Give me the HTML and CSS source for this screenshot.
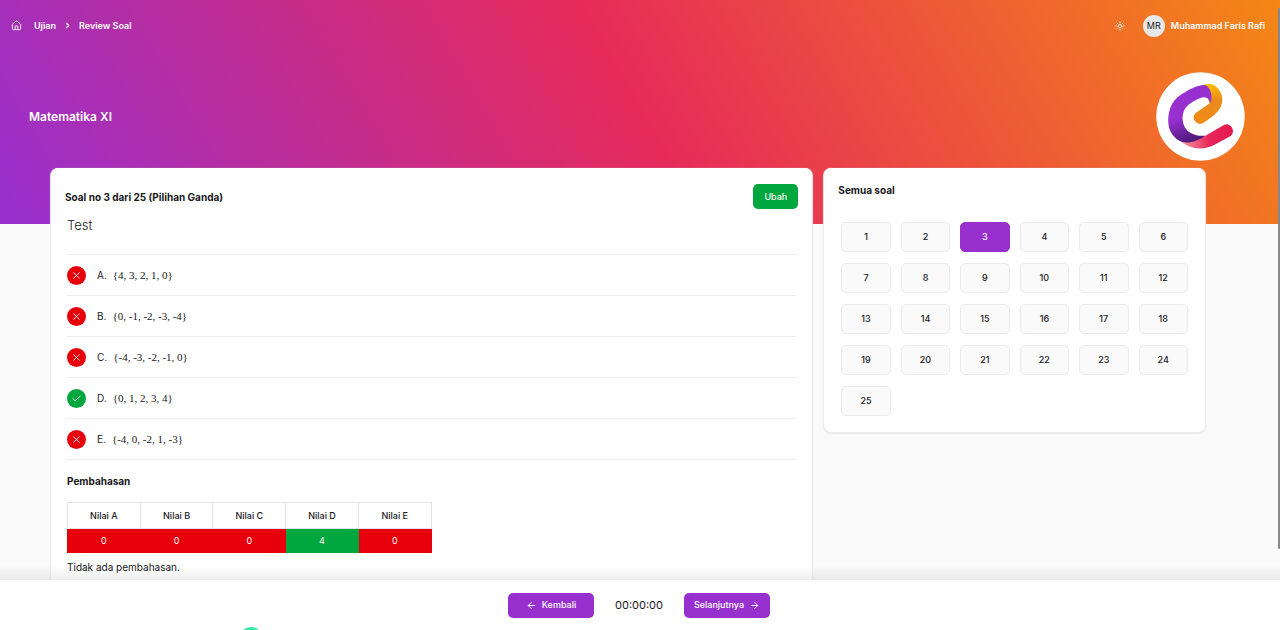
FILE: index.html
```html
<!DOCTYPE html>
<html lang="id">
<head>
<meta charset="utf-8">
<meta name="viewport" content="width=device-width, initial-scale=1">
<title>Review Soal</title>
<link rel="stylesheet" href="styles.css">
</head>
<body>
<svg class="defs" width="0" height="0" aria-hidden="true">
  <symbol id="cross" viewBox="0 0 24 24"><path d="M18 6 6 18M6 6l12 12"/></symbol>
  <symbol id="check" viewBox="0 0 24 24"><path d="m4 12 5 5L20 7"/></symbol>
</svg>
<div class="app">
  <div class="page">
    <header class="banner">
      <div class="topbar">
        <nav class="crumbs" aria-label="Breadcrumb">
          <a href="#" aria-label="Beranda"><svg class="icon home" viewBox="0 0 24 24"><path d="M15 21v-7a1 1 0 0 0-1-1h-4a1 1 0 0 0-1 1v7"/><path d="M3 10a2 2 0 0 1 .7-1.5l7-6a2 2 0 0 1 2.6 0l7 6A2 2 0 0 1 21 10v9a2 2 0 0 1-2 2H5a2 2 0 0 1-2-2z"/></svg></a>
          <a href="#">Ujian</a>
          <svg class="icon chevron" viewBox="0 0 24 24"><path d="m9 18 6-6-6-6"/></svg>
          <a href="#">Review Soal</a>
        </nav>
        <div class="account">
          <button class="theme" type="button" aria-label="Tema"><svg class="icon sun" viewBox="0 0 24 24"><circle cx="12" cy="12" r="4"/><path d="M12 2v2M12 20v2M5 5l1.400 1.400M17.600 17.600 19 19M2 12h2M20 12h2M6.400 17.600 5 19M19 5l-1.400 1.400"/></svg></button>
          <button class="user" type="button"><span class="avatar">MR</span><span>Muhammad Faris Rafi</span></button>
        </div>
      </div>
      <div class="hero">
        <h1>Matematika XI</h1>
        <svg class="logo" viewBox="17 20 267 267" role="img" aria-label="Logo">
          <defs>
            <linearGradient id="violet" x1="0" y1="0" x2=".3" y2="1"><stop offset=".6" stop-color="#9730cf"/><stop offset="1" stop-color="#541a80"/></linearGradient>
            <linearGradient id="amber" x1="0" y1="0" x2=".1" y2="1"><stop offset="0" stop-color="#ffc400"/><stop offset=".5" stop-color="#e98a1c"/><stop offset="1" stop-color="#f28a18"/></linearGradient>
            <linearGradient id="rose" x1="0" y1="0" x2="1" y2="0"><stop offset="0" stop-color="#f7a0a8"/><stop offset=".25" stop-color="#f06a84"/><stop offset=".55" stop-color="#e8275a"/><stop offset="1" stop-color="#e2174b"/></linearGradient>
          </defs>
          <circle cx="150.500" cy="153.500" r="133" fill="#fff"/>
          <path fill="url(#amber)" d="M158 59C192 46 216 74 216 103C215 132 197 147 157 174A19 19 0 0 1 136 143L178 114Z"/>
          <path fill="url(#rose)" d="M88 225C120 232 145 222 165 211L222 178A20 20 0 0 1 241 212L190 240C160 256 115 252 88 225Z"/>
          <path fill="url(#violet)" d="M162 59C181 63 188 92 181 113C177 101 169 94 158 96C145 99 120 112 110 123C95 138 93 165 103 185C112 202 135 214 165 211C145 225 120 235 96 230C76 222 63 207 57 190C49 160 55 120 80 97C95 84 140 56 162 59Z"/>
        </svg>
      </div>
    </header>
    <main class="content">
      <section class="card question">
        <div class="question-head">
          <h2>Soal no 3 dari 25 (Pilihan Ganda)</h2>
          <button class="edit" type="button">Ubah</button>
        </div>
        <div class="question-body">
          <p class="prompt">Test</p>
          <ul class="answers">
            <li><span class="mark wrong"><svg class="icon"><use href="#cross"/></svg></span><span class="letter">A.</span><span class="math">{4, 3, 2, 1, 0}</span></li>
            <li><span class="mark wrong"><svg class="icon"><use href="#cross"/></svg></span><span class="letter">B.</span><span class="math">{0, -1, -2, -3, -4}</span></li>
            <li><span class="mark wrong"><svg class="icon"><use href="#cross"/></svg></span><span class="letter">C.</span><span class="math">{-4, -3, -2, -1, 0}</span></li>
            <li><span class="mark right"><svg class="icon"><use href="#check"/></svg></span><span class="letter">D.</span><span class="math">{0, 1, 2, 3, 4}</span></li>
            <li><span class="mark wrong"><svg class="icon"><use href="#cross"/></svg></span><span class="letter">E.</span><span class="math">{-4, 0, -2, 1, -3}</span></li>
          </ul>
          <h2>Pembahasan</h2>
          <table class="scores">
            <thead><tr><th>Nilai A</th><th>Nilai B</th><th>Nilai C</th><th>Nilai D</th><th>Nilai E</th></tr></thead>
            <tbody><tr><td>0</td><td>0</td><td>0</td><td class="right">4</td><td>0</td></tr></tbody>
          </table>
          <p class="note">Tidak ada pembahasan.</p>
        </div>
      </section>
      <section class="card all">
        <h2>Semua soal</h2>
        <div class="numbers">
          <button type="button">1</button><button type="button">2</button><button type="button" class="current" aria-current="true">3</button><button type="button">4</button><button type="button">5</button><button type="button">6</button>
          <button type="button">7</button><button type="button">8</button><button type="button">9</button><button type="button">10</button><button type="button">11</button><button type="button">12</button>
          <button type="button">13</button><button type="button">14</button><button type="button">15</button><button type="button">16</button><button type="button">17</button><button type="button">18</button>
          <button type="button">19</button><button type="button">20</button><button type="button">21</button><button type="button">22</button><button type="button">23</button><button type="button">24</button>
          <button type="button">25</button>
        </div>
      </section>
    </main>
    <div class="scroll-thumb"></div>
  </div>
  <footer class="actions">
    <button type="button"><svg class="icon" viewBox="0 0 24 24"><path d="m12 19-7-7 7-7M19 12H5"/></svg>Kembali</button>
    <time>00:00:00</time>
    <button type="button">Selanjutnya<svg class="icon" viewBox="0 0 24 24"><path d="M5 12h14M12 5l7 7-7 7"/></svg></button>
    <span class="bubble"></span>
  </footer>
</div>
</body>
</html>
```
FILE: styles.css
```css
* { box-sizing: border-box; }
body {
  margin: 0;
  font-family: Inter, "Liberation Sans", sans-serif;
  font-size: 10px;
  line-height: 16px;
  color: #18181b;
  background: #fafafa;
}
h1, h2, p, ul { margin: 0; padding: 0; }
h2 { font-size: 10px; font-weight: 700; }
a { color: inherit; text-decoration: none; }
button {
  border: 0;
  padding: 0;
  font: inherit;
  color: inherit;
  background: none;
  cursor: pointer;
}
.defs { position: absolute; }
.icon {
  width: 11px;
  height: 11px;
  flex: none;
  fill: none;
  stroke: currentColor;
  stroke-width: 2;
  stroke-linecap: round;
  stroke-linejoin: round;
}
.app { height: 100vh; display: flex; flex-direction: column; }
.page { position: relative; flex: 1; min-height: 0; overflow: hidden; }

.banner {
  padding-bottom: 63px;
  color: #fff;
  background: linear-gradient(60deg, #9730cf, #e62b5a 50%, #f48715);
}
.topbar {
  height: 51px;
  padding: 0 15px 0 11px;
  display: flex;
  align-items: center;
  justify-content: space-between;
  font-size: 9px;
  font-weight: 600;
}
.crumbs, .account, .user, .crumbs a { display: flex; align-items: center; }
.crumbs .home { margin-right: 12px; }
.crumbs .chevron { width: 9px; height: 9px; margin: 0 7px; stroke-width: 3; }
.account { gap: 18px; }
.theme { display: flex; }
.user { gap: 6px; }
.sun { width: 10px; height: 10px; }
.avatar {
  width: 22px;
  height: 22px;
  border-radius: 50%;
  display: grid;
  place-items: center;
  font-weight: 400;
  color: #18181b;
  background: #e8e8ea;
}
.hero {
  padding: 21px 35px 0 29px;
  display: flex;
  align-items: center;
  justify-content: space-between;
}
.hero h1 { font-size: 12px; font-weight: 600; }
.logo { width: 89px; height: 89px; display: block; }

.content {
  margin-top: -56px;
  padding: 0 75px 0 51px;
  display: grid;
  grid-template-columns: 2fr 1fr;
  align-items: start;
  gap: 12px;
}
.card {
  border-radius: 7px;
  background: #fff;
  box-shadow: 0 1px 1px 1px #ebebed, 0 1px 3px rgba(0, 0, 0, .08);
}
.question { padding: 16px 14px 40px; }
.question-head { display: flex; align-items: center; justify-content: space-between; }
.edit {
  width: 45px;
  height: 25px;
  border-radius: 5px;
  font-size: 9px;
  font-weight: 500;
  color: #fff;
  background: #00a63e;
}
.question-body { padding: 8px 2px 0; }
.prompt {
  padding-bottom: 20px;
  border-bottom: 1px solid #eee;
  font-size: 13px;
  font-weight: 300;
  line-height: 17px;
}
.answers { margin-bottom: 13px; list-style: none; }
.answers li {
  height: 41px;
  border-bottom: 1px solid #eee;
  display: flex;
  align-items: center;
}
.mark {
  width: 19px;
  height: 19px;
  margin-right: 11px;
  border-radius: 50%;
  display: grid;
  place-items: center;
  color: #fff;
  background: #e7000b;
}
.mark.right { background: #00a63e; }
.letter { margin-right: 6px; }
.math { font-family: "Liberation Serif", serif; font-size: 11px; }
.scores {
  width: 50%;
  margin: 13px 0 6px;
  table-layout: fixed;
  border-collapse: collapse;
  font-size: 9px;
  line-height: 15px;
  text-align: center;
}
.scores th, .scores td { padding: 4px 0; border: 1px solid #e4e4e7; }
.scores th { padding: 5px 0; font-weight: 500; }
.scores td { color: #fff; background: #e7000b; border-color: #e7000b; }
.scores td.right { background: #00a63e; border-color: #00a63e; }

.all { padding: 14px 17px 16px; }
.all h2 { margin: 0 -3px 24px; }
.numbers { display: grid; grid-template-columns: repeat(6, 1fr); gap: 11px 10px; }
.numbers button {
  height: 30px;
  border: 1px solid #ebebed;
  border-radius: 5px;
  font-size: 9px;
  font-weight: 500;
  background: #fafafa;
}
.numbers .current { border-color: #9730cf; color: #fff; background: #9730cf; }

.scroll-thumb {
  position: absolute;
  top: 8px;
  right: 0;
  bottom: 31px;
  width: 2px;
  border-radius: 1px;
  background: #888;
}

.actions {
  position: relative;
  height: 50px;
  padding-right: 2px;
  overflow: hidden;
  display: flex;
  align-items: center;
  justify-content: center;
  gap: 21px;
  font-size: 11px;
  background: #fff;
}
.page::after {
  content: "";
  position: absolute;
  left: 0;
  right: 0;
  bottom: 0;
  height: 14px;
  background: linear-gradient(transparent, rgba(0, 0, 0, .07));
}
.actions button {
  width: 86px;
  height: 25px;
  border-radius: 5px;
  display: flex;
  align-items: center;
  justify-content: center;
  gap: 5px;
  font-size: 9px;
  font-weight: 500;
  color: #fff;
  background: #9730cf;
}
.bubble {
  position: absolute;
  left: 239px;
  bottom: -21px;
  width: 24px;
  height: 24px;
  border-radius: 50%;
  background: #3de8a0;
}
```
